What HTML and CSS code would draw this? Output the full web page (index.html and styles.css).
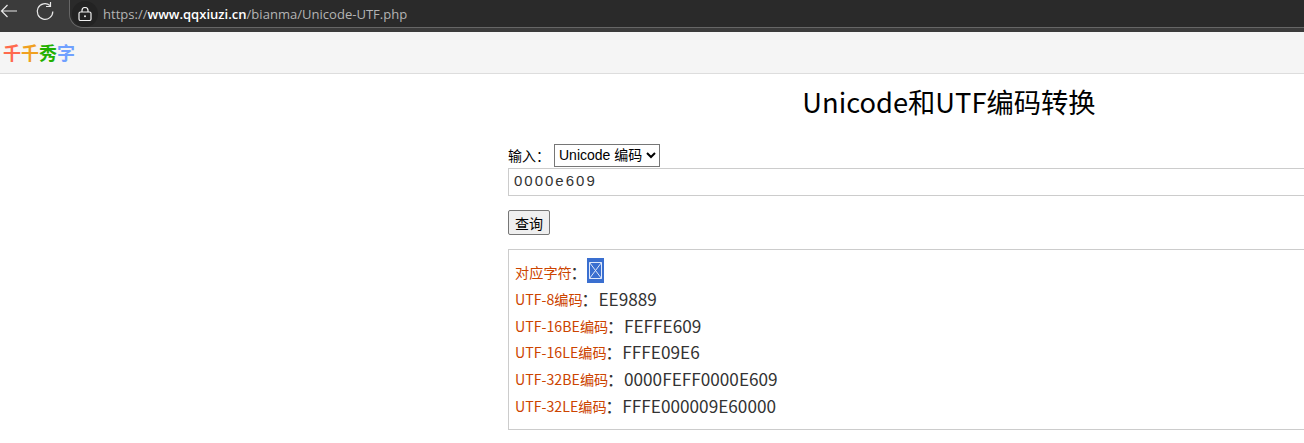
FILE: index.html
```
<!DOCTYPE html>
<html lang="zh">
<head>
<meta charset="utf-8">
<title>Unicode和UTF编码转换</title>
<link rel="stylesheet" href="styles.css">
</head>
<body>
<header class="chrome">
  <svg class="ic back" width="20" height="20" viewBox="0 0 20 20"><path d="M17 10H1.500M7.500 4 1.500 10l6 6" fill="none" stroke="#e8e8e8" stroke-width="1.200"/></svg>
  <svg class="ic reload" width="20" height="20" viewBox="0 0 20 20"><path d="M17.800 10.500a7.800 7.800 0 1 1-2.800-6M15.500 1v4.500H11" fill="none" stroke="#e8e8e8" stroke-width="1.200"/></svg>
  <div class="omni">
    <span class="lock"><svg width="14" height="14" viewBox="0 0 14 14"><rect x="1" y="5" width="12" height="8.500" rx="1.500" fill="none" stroke="#f0f0f0" stroke-width="1.200"/><path d="M4 5V3.500a3 3 0 0 1 6 0V5" fill="none" stroke="#f0f0f0" stroke-width="1.200"/><circle cx="7" cy="9.300" r="1" fill="#f0f0f0"/></svg></span>
    <span class="url">https://<b>www.qqxiuzi.cn</b>/bianma/Unicode-UTF.php</span>
  </div>
</header>
<nav class="nav"><span class="c1">千</span><span class="c2">千</span><span class="c3">秀</span><span class="c4">字</span></nav>
<main class="main">
  <h1 class="title">Unicode和UTF编码转换</h1>
  <div class="input-line"><label class="label">输入：</label><select class="sel"><option>Unicode 编码</option></select></div>
  <input class="code" type="text" value="0000e609">
  <button class="btn" type="button">查询</button>
  <div class="result">
    <div class="row first"><span class="k">对应字符</span>：<span class="glyph"><svg width="15" height="19" viewBox="0 0 15 19"><path d="M1.500 1.500h12v16h-12zM1.500 1.500l12 16M13.500 1.500l-12 16" fill="none" stroke="#dfe8fa" stroke-width="1"/></svg></span></div>
    <div class="row"><span class="k">UTF-8编码</span>：EE9889</div>
    <div class="row"><span class="k">UTF-16BE编码</span>：FEFFE609</div>
    <div class="row"><span class="k">UTF-16LE编码</span>：FFFE09E6</div>
    <div class="row"><span class="k">UTF-32BE编码</span>：0000FEFF0000E609</div>
    <div class="row"><span class="k">UTF-32LE编码</span>：FFFE000009E60000</div>
  </div>
</main>
</body>
</html>
```
FILE: styles.css
```
html,body{margin:0;padding:0;background:#fff;overflow:hidden;width:1304px;height:443px}
body{font-family:"Noto Sans CJK SC","Noto Sans",sans-serif;color:#000}
.chrome{height:32px;background:#3b3b3b;display:flex;align-items:flex-start}
.ic{flex:none}
.back{margin-top:1px}
.reload{margin-left:15px;margin-top:1px}
.omni{margin-left:14px;height:28px;flex:1;display:flex;align-items:center;background:#2a2a2a;border:1px solid #666;border-width:0 0 1px 1px;border-radius:0 0 0 14px;box-sizing:border-box;padding-left:2px}
.lock{display:flex;width:26px;height:26px;align-items:center;justify-content:center;background:#232323;border-radius:13px}
.url{margin-left:5px;font:13.050px/18px "Open Sans","Noto Sans",sans-serif;color:#b4b4b4}
.url b{font-weight:600;color:#fff}
.nav{height:42px;background:#f5f5f5;border-bottom:1px solid #ddd;display:flex;align-items:center;padding:0 0 2px 3px;font:700 18px/24px "Noto Sans CJK SC",sans-serif;box-sizing:border-box}
.c1{color:#ff6a4d}
.c2{color:#f0a020}
.c3{color:#22b000}
.c4{color:#70a0ff}
.main{width:882px;margin-left:508px;display:flex;flex-direction:column;align-items:flex-start}
.title{width:100%;margin:9px 0 0;font:400 27.300px/36px "Noto Sans CJK SC",sans-serif;text-align:center;color:#000}
.input-line{display:flex;align-items:center;margin-top:25px;height:22px}
.label{font:14px/22px "Noto Sans CJK SC",sans-serif}
.sel{margin-left:4px;height:23px;width:106px;font:14px "Liberation Sans","Noto Sans CJK SC",sans-serif;background:#fff;border:1px solid #767676;padding:0}
.code{width:100%;height:28px;box-sizing:border-box;border:1px solid #ccc;padding:0 5px 3px;font:15px/23px "Liberation Sans",sans-serif;letter-spacing:2px;color:#333;outline:0;margin-top:2px;background:#fff}
.btn{margin-top:14px;width:42px;height:25px;padding:0;font:14px "Noto Sans CJK SC",sans-serif;background:#efefef;border:1px solid #767676;border-radius:2px;color:#000}
.result{width:100%;box-sizing:border-box;margin-top:14px;border:1px solid #ccc;padding:8px 6px 0;height:181px}
.row{height:26.600px;display:flex;align-items:center;color:#333;white-space:nowrap;font:17.200px/22px "Noto Sans CJK SC",sans-serif}
.first{height:28px}
.k{font:14.200px/20px "Noto Sans CJK SC",sans-serif;color:#cc4400;margin-right:-1.500px}
.glyph{display:flex;align-items:center;justify-content:center;width:17px;height:25px;background:#3a6fd0;margin:-3px 0 0 -.5px}
```
